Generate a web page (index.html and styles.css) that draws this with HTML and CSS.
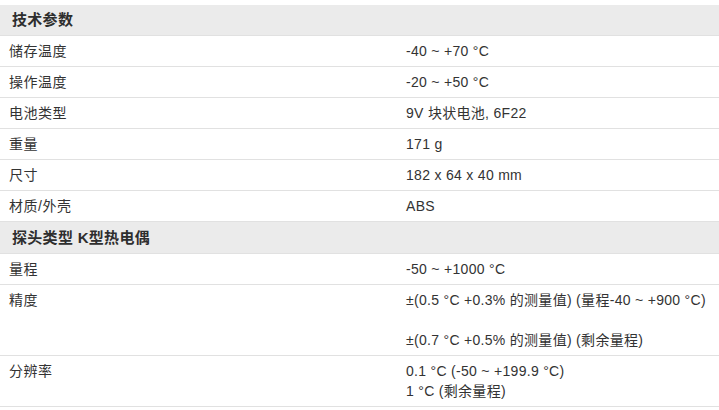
FILE: index.html
```html
<!DOCTYPE html>
<html lang="zh-CN">
<head>
<meta charset="utf-8">
<title>技术参数</title>
<link rel="stylesheet" href="styles.css">
</head>
<body>
<table class="spec">
  <tbody>
    <tr class="group"><th colspan="2">技术参数</th></tr>
    <tr><td class="label">储存温度</td><td class="value">-40 ~ +70 °C</td></tr>
    <tr><td class="label">操作温度</td><td class="value">-20 ~ +50 °C</td></tr>
    <tr><td class="label">电池类型</td><td class="value">9V 块状电池, 6F22</td></tr>
    <tr><td class="label">重量</td><td class="value">171 g</td></tr>
    <tr><td class="label">尺寸</td><td class="value">182 x 64 x 40 mm</td></tr>
    <tr><td class="label">材质/外壳</td><td class="value">ABS</td></tr>
    <tr class="group group-2"><th colspan="2">探头类型 K型热电偶</th></tr>
    <tr><td class="label">量程</td><td class="value">-50 ~ +1000 °C</td></tr>
    <tr><td class="label">精度</td><td class="value">±(0.5 °C +0.3% 的测量值) (量程-40 ~ +900 °C)<br><br>±(0.7 °C +0.5% 的测量值) (剩余量程)</td></tr>
    <tr><td class="label">分辨率</td><td class="value">0.1 °C (-50 ~ +199.9 °C)<br>1 °C (剩余量程)</td></tr>
  </tbody>
</table>
</body>
</html>
```

FILE: styles.css
```css
html, body {
  background: #ffffff;
}
body {
  margin: 5px 0 0 0;
  font-family: "Liberation Sans", Arial, "Noto Sans CJK SC", sans-serif;
  font-size: 14px;
  color: #333333;
}
.spec {
  width: 719px;
  border-collapse: collapse;
  border-spacing: 0;
}
.spec td,
.spec th {
  padding: 5px 9px;
  line-height: 20px;
  border-bottom: 1px solid #e1e1e1;
  vertical-align: top;
  text-align: left;
}
.spec .label {
  width: 379px;
  letter-spacing: 0.5px;
}
.spec .value {
  padding-left: 9px;
  letter-spacing: 0.3px;
}
.group th {
  background: #ebebeb;
  font-size: 15px;
  font-weight: bold;
  padding-left: 12px;
  color: #2e2e2e;
  letter-spacing: 0.3px;
}
.group-2 th {
  padding-top: 6px;
}
```
